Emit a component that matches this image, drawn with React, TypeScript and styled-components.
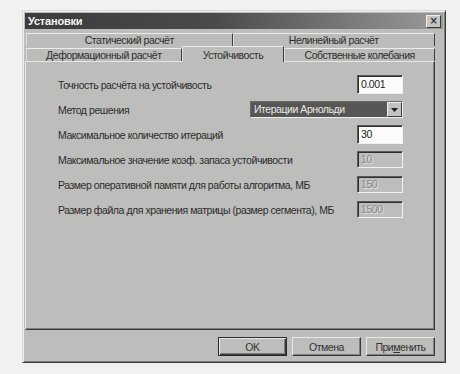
import { Fragment } from 'react';
import styled, { createGlobalStyle } from 'styled-components';

const GlobalStyle = createGlobalStyle`
    body {
        margin: 0;
        background: #f1f1f0;
        font-family: "Liberation Sans", Arial, sans-serif;
    }
`;

const FACE = '#bdbdbb';

const Dialog = styled.div`
    margin: 10px 0 0 22px;
    width: 424px;
    height: 353px;
    box-sizing: border-box;
    background: ${FACE};
    border: 1px solid;
    border-color: #dadad8 #3a3a3a #3a3a3a #dadad8;
    box-shadow: inset 1px 1px #ededeb, inset -1px -1px #7c7c7a;
    padding: 2px;
    display: flex;
    flex-direction: column;
    font-size: 10.5px;
    letter-spacing: -0.45px;
`;

const TitleBar = styled.div`
    height: 16px;
    flex-shrink: 0;
    background: linear-gradient(90deg, #3c3c3c 0%, #4a4a4a 45%, #9a9a98 100%);
    display: flex;
    align-items: center;
    justify-content: space-between;
    padding: 0 2px 0 3px;
`;

const Title = styled.span`
    color: #f4f4f4;
    font-size: 11px;
    font-weight: bold;
    letter-spacing: -0.2px;
`;

const CloseButton = styled.div`
    width: 13px;
    height: 11px;
    background: #c4c4c2;
    border: 1px solid;
    border-color: #eeeeec #3a3a3a #3a3a3a #eeeeec;
    display: flex;
    align-items: center;
    justify-content: center;
    color: #333;
    font-family: "DejaVu Sans", sans-serif;
    font-size: 10px;
    font-weight: bold;
    line-height: 1;
`;

const Body = styled.div`
    flex: 1;
    display: flex;
    flex-direction: column;
    padding: 4px 8px 0 0;
`;

const TabRow = styled.div<{ $h: number }>`
    display: flex;
    height: ${(p) => p.$h}px;
    align-items: flex-end;
    padding-left: 1px;
`;

const Tab = styled.div<{ $w: number; $active?: boolean }>`
    width: ${(p) => p.$w}px;
    height: ${(p) => (p.$active ? 16 : 13)}px;
    margin-bottom: ${(p) => (p.$active ? -1 : 0)}px;
    position: relative;
    z-index: ${(p) => (p.$active ? 2 : 1)};
    box-sizing: border-box;
    background: ${(p) => (p.$active ? FACE : '#bbbbb9')};
    border-top: 1px solid #ececea;
    border-left: 1px solid #dcdcda;
    border-right: 1px solid #3e3e3e;
    display: flex;
    align-items: center;
    justify-content: center;
    color: #2e2e2e;
    white-space: nowrap;
`;

const Panel = styled.div`
    height: 269px;
    box-sizing: border-box;
    border: 1px solid;
    border-color: #e6e6e4 #3a3a3a #3a3a3a #e6e6e4;
    box-shadow: inset -1px -1px #7e7e7c;
    padding: 10px 31px 0 32px;
    display: grid;
    grid-template-columns: minmax(0, 1fr) auto;
    grid-auto-rows: 25px;
    align-items: center;
`;

const Label = styled.span`
    color: #2c2c2c;
    white-space: nowrap;
`;

const Field = styled.div<{ $disabled?: boolean }>`
    justify-self: end;
    width: 46px;
    height: ${(p) => (p.$disabled ? 17 : 19)}px;
    box-sizing: border-box;
    background: ${(p) => (p.$disabled ? FACE : '#fbfbfb')};
    border: 1px solid;
    border-color: #5a5a58 #f2f2f0 #f2f2f0 #5a5a58;
    box-shadow: inset 1px 1px #2e2e2e;
    padding: ${(p) => (p.$disabled ? 1 : 2)}px 0 0 3px;
    color: ${(p) => (p.$disabled ? '#8a8a88' : '#222')};
    text-shadow: ${(p) => (p.$disabled ? '1px 1px #e4e4e2' : 'none')};
`;

const Combo = styled.div`
    justify-self: end;
    width: 153px;
    height: 17px;
    box-sizing: border-box;
    border: 1px solid;
    border-color: #6a6a68 #efefed #efefed #6a6a68;
    background: #565654;
    display: flex;
    align-items: stretch;
`;

const ComboText = styled.span`
    flex: 1;
    color: #e8e8e6;
    padding: 1px 0 0 3px;
    white-space: nowrap;
`;

const ComboArrow = styled.div`
    width: 15px;
    box-sizing: border-box;
    background: #c2c2c0;
    border: 1px solid;
    border-color: #efefed #3a3a3a #3a3a3a #efefed;
    display: flex;
    align-items: center;
    justify-content: center;
`;

const ButtonBar = styled.div`
    display: flex;
    justify-content: flex-end;
    gap: 5px;
    padding-top: 7px;
`;

const Button = styled.div<{ $default?: boolean }>`
    width: 69px;
    height: 19px;
    box-sizing: border-box;
    border: 1px solid;
    border-color: ${(p) => (p.$default ? '#2a2a2a' : '#e8e8e6 #3a3a3a #3a3a3a #e8e8e6')};
    box-shadow: ${(p) =>
        p.$default
            ? 'inset 1px 1px #e8e8e6, inset -1px -1px #3a3a3a, inset -2px -2px #7e7e7c'
            : 'inset -1px -1px #7e7e7c'};
    display: flex;
    align-items: center;
    justify-content: center;
    color: #333;
`;

const rows = [
    { label: 'Точность расчёта на устойчивость', value: '0.001' },
    { label: 'Метод решения', combo: 'Итерации Арнольди' },
    { label: 'Максимальное количество итераций', value: '30' },
    { label: 'Максимальное значение коэф. запаса устойчивости', value: '10', disabled: true },
    { label: 'Размер оперативной памяти для работы алгоритма, МБ', value: '150', disabled: true },
    { label: 'Размер файла для хранения матрицы (размер сегмента), МБ', value: '1500', disabled: true },
];

export default function App() {
    return (
        <>
            <GlobalStyle />
            <Dialog>
                <TitleBar>
                    <Title>Установки</Title>
                    <CloseButton>×</CloseButton>
                </TitleBar>
                <Body>
                    <TabRow $h={13}>
                        <Tab $w={207}>Статический расчёт</Tab>
                        <Tab $w={203}>Нелинейный расчёт</Tab>
                    </TabRow>
                    <TabRow $h={15}>
                        <Tab $w={156}>Деформационный расчёт</Tab>
                        <Tab $w={103} $active>Устойчивость</Tab>
                        <Tab $w={151}>Собственные колебания</Tab>
                    </TabRow>
                    <Panel>
                        {rows.map((r) => (
                            <Fragment key={r.label}>
                                <Label>{r.label}</Label>
                                {r.combo ? (
                                    <Combo>
                                        <ComboText>{r.combo}</ComboText>
                                        <ComboArrow>
                                            <svg width="7" height="4" viewBox="0 0 7 4">
                                                <path d="M0 0h7L3.5 4z" fill="#222" />
                                            </svg>
                                        </ComboArrow>
                                    </Combo>
                                ) : (
                                    <Field $disabled={r.disabled}>{r.value}</Field>
                                )}
                            </Fragment>
                        ))}
                    </Panel>
                    <ButtonBar>
                        <Button $default>OK</Button>
                        <Button>Отмена</Button>
                        <Button>
                            При<u>м</u>енить
                        </Button>
                    </ButtonBar>
                </Body>
            </Dialog>
        </>
    );
}
